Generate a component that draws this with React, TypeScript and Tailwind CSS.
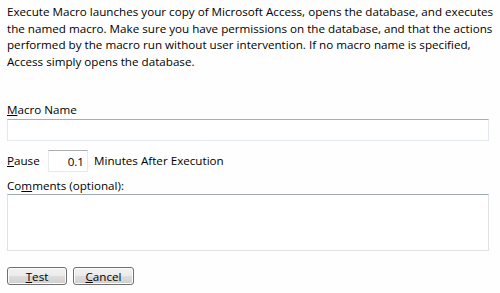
export default function App() {
  const font = { fontFamily: '"Open Sans", "Noto Sans", sans-serif' };
  const lines = [
    "Execute Macro launches your copy of Microsoft Access, opens the database, and executes",
    "the named macro. Make sure you have permissions on the database, and that the actions",
    "performed by the macro run without user intervention. If no macro name is specified,",
    "Access simply opens the database.",
  ];
  return (
    <div
      className="h-[293px] w-[500px] overflow-hidden bg-[#fefefe] pl-[7px] pt-[4px] text-[11.65px] leading-[16.5px] text-black"
      style={font}
    >
      <p>
        {lines.map((line) => (
          <span key={line} className="block whitespace-nowrap">
            {line}
          </span>
        ))}
      </p>

      <label className="mt-[32px] block h-[16px] leading-[16px]">
        <span className="underline">M</span>acro Name
      </label>
      <input
        type="text"
        className="mt-[1px] block h-[22px] w-[482px] border border-[#e3e9ef] border-t-[#abadb3] bg-white outline-none"
      />

      <div className="mt-[9px] flex h-[22px] items-center">
        <span className="w-[41px]">
          <span className="underline">P</span>ause
        </span>
        <input
          type="text"
          defaultValue="0.1"
          className="h-[22px] w-[40px] border border-[#e3e9ef] border-t-[#abadb3] bg-white pr-[3px] text-right outline-none"
        />
        <span className="ml-[6px]">Minutes After Execution</span>
      </div>

      <label className="mt-[6px] block h-[16px] leading-[16px]">
        Co<span className="underline">m</span>ments (optional):
      </label>
      <textarea className="block h-[57px] w-[482px] resize-none border border-[#dfe3e6] border-t-[#a0acb4] bg-white outline-none" />

      <div className="mt-[16px] flex gap-[6px]">
        <button
          type="button"
          className="h-[18px] w-[60px] rounded-[3px] border border-[#707070] bg-[linear-gradient(#f2f2f2_0%,#ebebeb_50%,#dddddd_50%,#cfcfcf_100%)] leading-[15px] shadow-[inset_0_0_0_1px_#fcfcfc]"
        >
          <span className="underline">T</span>est
        </button>
        <button
          type="button"
          className="h-[18px] w-[61px] rounded-[3px] border border-[#707070] bg-[linear-gradient(#f2f2f2_0%,#ebebeb_50%,#dddddd_50%,#cfcfcf_100%)] leading-[15px] shadow-[inset_0_0_0_1px_#fcfcfc]"
        >
          <span className="underline">C</span>ancel
        </button>
      </div>
    </div>
  );
}
